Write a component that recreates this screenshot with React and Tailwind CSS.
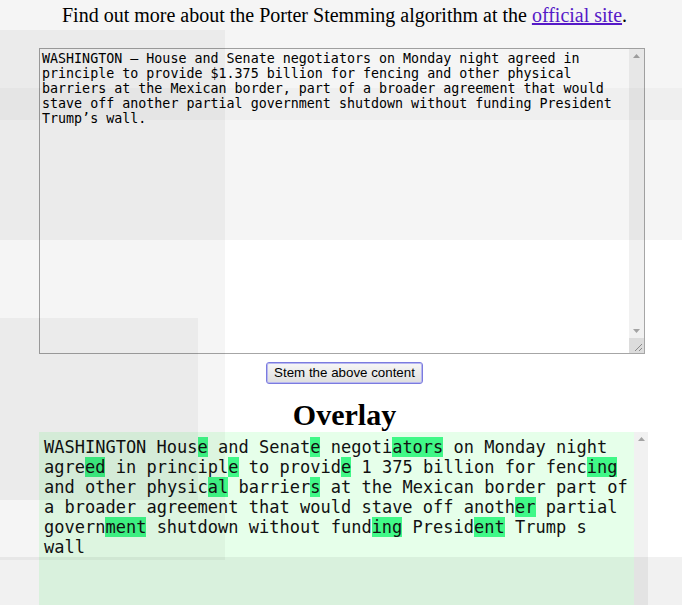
const ARTICLE =
  'WASHINGTON — House and Senate negotiators on Monday night agreed in principle to provide $1.375 billion for fencing and other physical barriers at the Mexican border, part of a broader agreement that would stave off another partial government shutdown without funding President Trump’s wall.';

// [stem, removed suffix]
const WORDS = [
  ['WASHINGTON', ''], ['Hous', 'e'], ['and', ''], ['Senat', 'e'], ['negoti', 'ators'],
  ['on', ''], ['Monday', ''], ['night', ''], ['agre', 'ed'], ['in', ''], ['principl', 'e'],
  ['to', ''], ['provid', 'e'], ['1', ''], ['375', ''], ['billion', ''], ['for', ''],
  ['fenc', 'ing'], ['and', ''], ['other', ''], ['physic', 'al'], ['barrier', 's'], ['at', ''],
  ['the', ''], ['Mexican', ''], ['border', ''], ['part', ''], ['of', ''], ['a', ''],
  ['broader', ''], ['agreement', ''], ['that', ''], ['would', ''], ['stave', ''], ['off', ''],
  ['anoth', 'er'], ['partial', ''], ['govern', 'ment'], ['shutdown', ''], ['without', ''],
  ['fund', 'ing'], ['Presid', 'ent'], ['Trump', ''], ['s', ''], ['wall', ''],
];

function Shade({ className }) {
  return <div className={`pointer-events-none absolute z-10 bg-black/[0.04] ${className}`} />;
}

function Arrow({ down }) {
  return (
    <svg width="15" height="15" viewBox="0 0 15 15" className="block shrink-0">
      <path d={down ? 'M4 6h7l-3.5 4z' : 'M4 9h7l-3.5-4z'} fill="#a3a3a3" />
    </svg>
  );
}

function Grip() {
  return (
    <svg width="15" height="15" viewBox="0 0 15 15" className="block shrink-0 bg-[#dcdcdc]">
      <path d="M13 6L6 13M13 10L10 13" stroke="#8a8a8a" strokeWidth="1" />
    </svg>
  );
}

export default function App() {
  return (
    <div className="relative h-[605px] w-[682px] overflow-hidden bg-white font-['Liberation_Serif',serif] text-black">
      <Shade className="left-0 top-0 h-[240px] w-[682px]" />
      <Shade className="left-0 top-[30px] h-[530px] w-[225px]" />
      <Shade className="left-0 top-[318px] h-[182px] w-[198px]" />
      <Shade className="left-0 top-[88px] h-[32px] w-[682px] bg-black/[0.025]" />
      <Shade className="left-0 top-[557px] h-[48px] w-[682px] bg-black/[0.055]" />

      <p className="pl-[7px] pt-[4px] text-center text-[20px] leading-[23px]">
        Find out more about the Porter Stemming algorithm at the{' '}
        <a href="#" className="text-[#5a1bd0] underline">
          official site
        </a>
        .
      </p>

      <div className="ml-[39px] mt-[21px] flex h-[306px] w-[606px] border border-[#a6a6a6] bg-white">
        <textarea
          defaultValue={ARTICLE}
          className="min-w-0 flex-1 resize-none overflow-hidden bg-white p-[2px] font-['DejaVu_Sans_Mono',monospace] text-[13.333px] leading-[15px] text-black outline-none"
        />
        <div className="flex w-[15px] flex-col bg-[#f1f1f1]">
          <Arrow />
          <div className="flex-1" />
          <Arrow down />
          <Grip />
        </div>
      </div>

      <div className="mt-[8px] flex justify-center pl-[7px]">
        <button
          type="button"
          className="h-[22px] rounded-[3px] border border-[#7b7bdf] bg-gradient-to-b from-[#f7f7f7] to-[#dedede] px-[7px] font-['Liberation_Sans',Arial,sans-serif] text-[13.333px] leading-[18px] text-black shadow-[inset_0_0_0_1px_#b8b8f0]"
        >
          Stem the above content
        </button>
      </div>

      <h2 className="mt-[13px] pl-[7px] text-center text-[30px] font-bold leading-[35px]">Overlay</h2>

      <div className="ml-[39px] flex h-[305px] w-[609px] bg-[#e6ffea]">
        <div className="min-w-0 flex-1 pb-[4px] pl-[5px] pr-[2px] pt-[5px] font-['DejaVu_Sans_Mono',monospace] text-[17px] leading-[20px] text-[#111]">
          {WORDS.map(([stem, suffix], i) => (
            <span key={i}>
              {stem}
              {suffix && <span className="bg-[#40f887]">{suffix}</span>}
              {i < WORDS.length - 1 ? ' ' : ''}
            </span>
          ))}
        </div>
        <div className="flex w-[14px] flex-col bg-[#f1f1f1]">
          <Arrow />
        </div>
      </div>
    </div>
  );
}
